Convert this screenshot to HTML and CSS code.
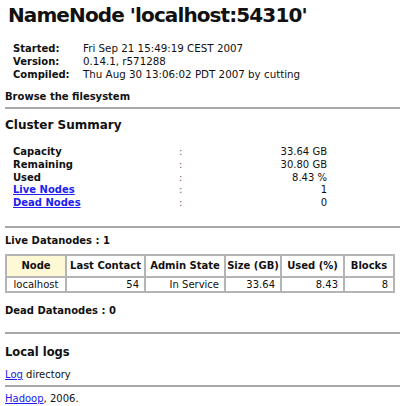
FILE: index.html
```html
<!DOCTYPE html>
<html>
<head>
<meta charset="utf-8">
<title>Hadoop NameNode localhost:54310</title>
<link rel="stylesheet" href="styles.css">
</head>
<body>
<h1 class="title">NameNode 'localhost:54310'</h1>
<table class="info">
  <tr><td class="lbl">Started:</td><td>Fri Sep 21 15:49:19 CEST 2007</td></tr>
  <tr><td class="lbl">Version:</td><td>0.14.1, r571288</td></tr>
  <tr><td class="lbl">Compiled:</td><td>Thu Aug 30 13:06:02 PDT 2007 by cutting</td></tr>
</table>
<p class="browse">Browse the filesystem</p>
<hr class="rule r1">
<h2 class="section s1">Cluster Summary</h2>
<table class="summary">
  <tr><td class="k">Capacity</td><td class="c">:</td><td class="v">33.64 GB</td></tr>
  <tr><td class="k">Remaining</td><td class="c">:</td><td class="v">30.80 GB</td></tr>
  <tr><td class="k">Used</td><td class="c">:</td><td class="v">8.43 %</td></tr>
  <tr><td class="k"><a href="#live">Live Nodes</a></td><td class="c">:</td><td class="v">1</td></tr>
  <tr><td class="k"><a href="#dead">Dead Nodes</a></td><td class="c">:</td><td class="v">0</td></tr>
</table>
<hr class="rule r2">
<p class="sub live">Live Datanodes : 1</p>
<table class="nodes">
  <colgroup>
    <col class="w1"><col class="w2"><col class="w3"><col class="w4"><col class="w5"><col class="w6">
  </colgroup>
  <tr>
    <th class="sorted">Node</th>
    <th>Last Contact</th>
    <th>Admin State</th>
    <th>Size (GB)</th>
    <th>Used (%)</th>
    <th>Blocks</th>
  </tr>
  <tr>
    <td class="name">localhost</td>
    <td>54</td>
    <td>In Service</td>
    <td>33.64</td>
    <td>8.43</td>
    <td>8</td>
  </tr>
</table>
<p class="sub dead">Dead Datanodes : 0</p>
<hr class="rule r3">
<h2 class="section s2">Local logs</h2>
<p class="line l1"><a href="#logs">Log</a> directory</p>
<hr class="rule r4">
<p class="line l2"><a href="#hadoop">Hadoop</a>, 2006.</p>
</body>
</html>
```
FILE: styles.css
```css
html { background: #fff; }
body {
  margin: 0 0 0 5px;
  font-family: "DejaVu Sans", Verdana, sans-serif;
  font-size: 10px;
  color: #111;
}
a { color: #2020ee; text-decoration: underline; }

.title {
  margin: 0;
  padding-left: 3px;
  font-size: 20px;
  letter-spacing: -0.9px;
  line-height: 30px;
  font-weight: bold;
}

.info {
  margin: 12px 0 0 6px;
  border-collapse: collapse;
  font-size: 10.3px;
}
.info td { padding: 0 2px; line-height: 13px; white-space: nowrap; }
.info .lbl { font-weight: bold; width: 66px; font-size: 10px; }

.browse {
  margin: 9px 0 0 0;
  line-height: 13px;
  font-weight: bold;
}

.rule {
  border: 0;
  height: 2px;
  background: #a8a8a8;
  margin: 0;
}
.r1 { margin-top: 4px; }
.r2 { margin-top: 16px; }
.r3 { margin-top: 15px; }
.r4 { margin-top: 4px; }

.section {
  margin: 0;
  font-size: 12px;
  line-height: 20px;
  font-weight: bold;
}
.s1 { margin-top: 6px; }
.s2 { margin-top: 8px; font-size: 11.5px; }

.summary {
  margin: 11px 0 0 6px;
  border-collapse: collapse;
  font-weight: bold;
}
.summary td { padding: 0 2px; height: 12.75px; line-height: 12.75px; white-space: nowrap; }
.summary .k { width: 162px; }
.summary .c { width: 60px; color: #666; font-weight: normal; }
.summary .v { width: 84px; text-align: right; font-weight: normal; }

.sub {
  margin: 0;
  line-height: 13px;
  font-weight: bold;
}
.live { margin-top: 6px; }
.dead { margin-top: 11px; }

.nodes {
  margin-top: 7px;
  border-collapse: collapse;
  border: 2px solid #b4b4b4;
  table-layout: fixed;
  width: 388px;
}
.nodes .w1 { width: 60px; }
.nodes .w2 { width: 79px; }
.nodes .w3 { width: 80px; }
.nodes .w4 { width: 56px; }
.nodes .w5 { width: 63px; }
.nodes .w6 { width: 50px; }
.nodes th, .nodes td {
  border: 2px solid #b4b4b4;
  white-space: nowrap;
  overflow: hidden;
}
.nodes th {
  height: 20px;
  padding: 0;
  text-align: center;
  font-weight: bold;
}
.nodes td {
  height: 13px;
  padding: 0 5px 0 0;
  text-align: right;
  line-height: 13px;
}
.nodes td.name { text-align: center; padding: 0; }
.nodes .sorted { background: #fff8d4; }

.line { margin: 0; line-height: 13px; }
.l1 { margin-top: 6px; }
.l2 { margin-top: 5px; }
```
